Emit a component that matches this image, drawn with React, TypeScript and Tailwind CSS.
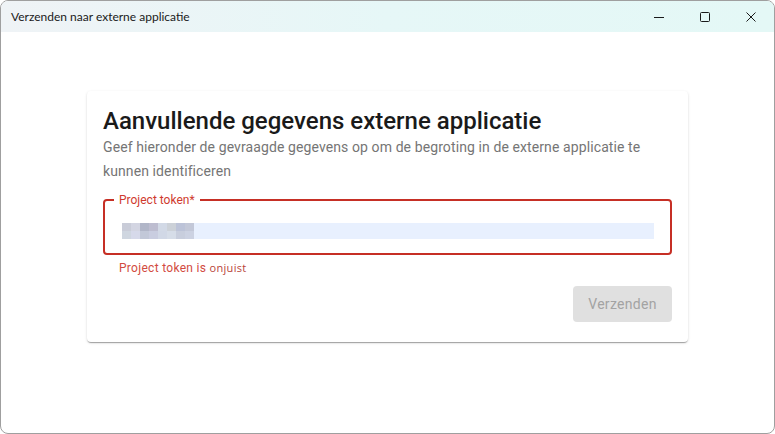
import React from 'react';

const PIXELS = [
  ['#c9ccd8', '#d3d5e2', '#b1b6c8', '#bdbdd0', '#d2d9e6', '#ccd1d8', '#bcc3d8', '#c3c8d8'],
  ['#cfd6e0', '#d6d9ea', '#c2c8d8', '#c9cde0', '#d1d8e6', '#d6dde8', '#c8cedd', '#ccd2e2'],
];

const TitleBar: React.FC = () => (
  <div className="h-[31px] flex items-center justify-between bg-gradient-to-r from-[#eff3f6] via-[#e6f7f7] to-[#e4f8f6] shrink-0">
    <span className="pl-[10px] text-[12px] text-[#1a1a1a]" style={{ fontFamily: 'Lato, "Noto Sans", sans-serif' }}>
      Verzenden naar externe applicatie
    </span>
    <div className="flex h-full">
      <div className="w-[46px] flex items-center justify-center">
        <svg width="10" height="10" viewBox="0 0 10 10">
          <path d="M0 5.5h10" stroke="#1a1a1a" strokeWidth="1" />
        </svg>
      </div>
      <div className="w-[46px] flex items-center justify-center">
        <svg width="10" height="10" viewBox="0 0 10 10">
          <rect x="0.5" y="0.5" width="9" height="9" rx="1" fill="none" stroke="#1a1a1a" strokeWidth="1" />
        </svg>
      </div>
      <div className="w-[46px] flex items-center justify-center">
        <svg width="10" height="10" viewBox="0 0 10 10">
          <path d="M0.5 0.5l9 9M9.5 0.5l-9 9" stroke="#1a1a1a" strokeWidth="1" />
        </svg>
      </div>
    </div>
  </div>
);

const App: React.FC = () => {
  return (
    <div className="w-[775px] h-[434px] bg-white overflow-hidden">
      <div
        className="w-[775px] h-[434px] rounded-lg border border-[#9f9f9f] bg-white flex flex-col overflow-hidden"
        style={{ fontFamily: 'Roboto, "Noto Sans", sans-serif' }}
      >
        <TitleBar />
        <div className="flex justify-center pt-[59px]">
          <div className="w-[601px] bg-white rounded-[4px] shadow-[0_2px_1px_-1px_rgba(0,0,0,0.2),0_1px_1px_0_rgba(0,0,0,0.14),0_1px_3px_0_rgba(0,0,0,0.12)] px-4 pt-[17px] pb-5">
            <h1 className="text-[24px] leading-[27px] text-[#1a1a1a] font-medium">
              Aanvullende gegevens externe applicatie
            </h1>
            <p className="text-[14px] leading-[24px] text-[#757575] tracking-[0.1px]">
              Geef hieronder de gevraagde gegevens op om de begroting in de externe applicatie te kunnen identificeren
            </p>

            <div className="mt-4">
              <div className="relative h-[56px] rounded-[4px] border-2 border-[#c62f25] flex items-center px-[15px]">
                <span className="absolute -top-[9px] left-[9px] bg-white px-[5px] text-[12px] leading-[16px] text-[#cf3a2e]">
                  Project token*
                </span>
                <div className="flex-1 h-[16px] mt-[7px] bg-[#e8f0fe] flex ml-[2px] mr-[1px]">
                  <div className="flex flex-col">
                    {PIXELS.map((row, r) => (
                      <div key={r} className="flex">
                        {row.map((c, i) => (
                          <div key={i} className="w-[9px] h-[8px]" style={{ backgroundColor: c }} />
                        ))}
                      </div>
                    ))}
                  </div>
                </div>
              </div>
              <p className="mt-[3px] ml-[16px] text-[12px] leading-[20px] text-[#d24b41] tracking-[0.3px]">
                Project token is{' '}
                <span className="text-[11px] text-[#b8443a]" style={{ fontFamily: '"Open Sans", sans-serif' }}>
                  onjuist
                </span>
              </p>
            </div>

            <div className="flex justify-end mt-2">
              <button className="w-[99px] h-[36px] rounded-[4px] bg-[#e0e0e0] text-[14px] text-[#a3a3a3] tracking-[0.3px]">
                Verzenden
              </button>
            </div>
          </div>
        </div>
      </div>
    </div>
  );
};

export default App;
